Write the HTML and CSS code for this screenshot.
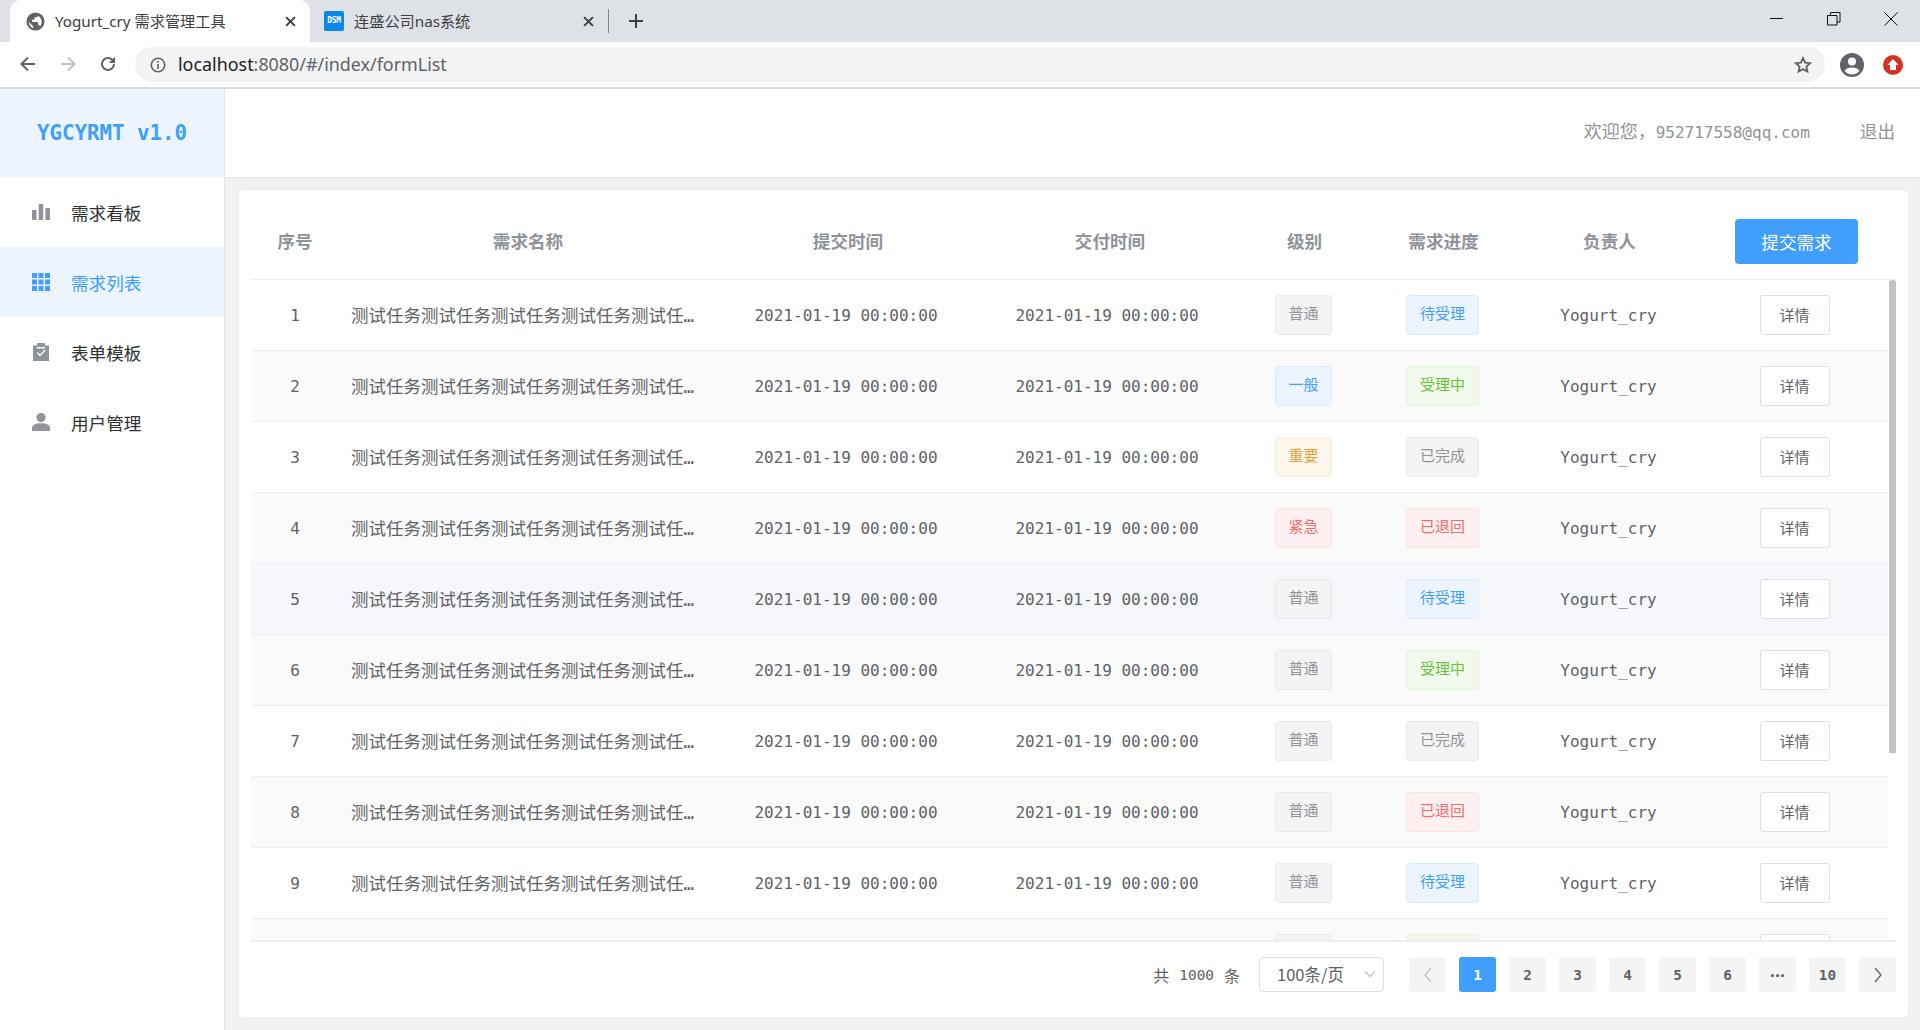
FILE: index.html
```html
<!DOCTYPE html>
<html lang="zh-CN">
<head>
<meta charset="utf-8">
<title>Yogurt_cry 需求管理工具</title>
<link rel="stylesheet" href="styles.css">
</head>
<body>
<svg class="defs" width="0" height="0" aria-hidden="true">
  <symbol id="i-bars" viewBox="0 0 18 18"><path d="M0 7h4.500v10H0zM6.700 1h4.500v16H6.700zM13.400 5h4.500v12h-4.500z"/></symbol>
  <symbol id="i-grid" viewBox="0 0 18 18"><path d="M0 0h5v5H0zM6.500 0h5v5h-5zM13 0h5v5h-5zM0 6.500h5v5H0zM6.500 6.500h5v5h-5zM13 6.500h5v5h-5zM0 13h5v5H0zM6.500 13h5v5h-5zM13 13h5v5h-5z"/></symbol>
  <symbol id="i-clip" viewBox="0 0 18 18"><path fill-rule="evenodd" d="M1 2.500h4V1.200C5 .5 5.500 0 6.200 0h5.600c.7 0 1.200.5 1.200 1.200v1.300h4V18H1zM5 4v1.500h8V4zm-.2 6.300 3.200 3.200 5.600-5.700-1-1-4.600 4.700-2.200-2.200z"/></symbol>
  <symbol id="i-user" viewBox="0 0 18 18"><circle cx="9" cy="4.600" r="4.600"/><path d="M0 18v-3c0-3 3.500-4.700 9-4.700s9 1.700 9 4.700v3z"/></symbol>
</svg>

<div class="chrome">
  <div class="tabstrip">
    <div class="tab tab-active">
      <svg class="tab-icon" viewBox="0 0 20 20"><circle cx="10" cy="10" r="9.500" fill="#5f6368"/><path fill="#fff" d="M9 17.400C5.800 17 3.300 13.900 2.900 10.500L7.500 15v1a1.500 1.500 0 0 0 1.500 1.400zM15 15c-.2-.6-.8-1-1.400-1h-.9v-2.800c0-.4-.4-.8-.8-.8H6.500V8.200h1.700c.4 0 .8-.4.8-.8V5.600h1.800c.8 0 1.500-.7 1.500-1.500V3.700A7.500 7.500 0 0 1 15 15z"/></svg>
      <span class="tab-title">Yogurt_cry 需求管理工具</span>
      <svg class="tab-close" viewBox="0 0 10 10"><path d="M1 1l8 8M9 1L1 9"/></svg>
    </div>
    <div class="tab tab-idle">
      <span class="favicon">DSM</span>
      <span class="tab-title">连盛公司nas系统</span>
      <svg class="tab-close" viewBox="0 0 10 10"><path d="M1 1l8 8M9 1L1 9"/></svg>
    </div>
    <span class="tab-sep"></span>
    <svg class="tab-plus" viewBox="0 0 16 16"><path d="M8 1v14M1 8h14"/></svg>
    <div class="win-ctrls">
      <svg viewBox="0 0 14 14"><path d="M0 6.500h13"/></svg>
      <svg viewBox="0 0 14 14"><path d="M.5 3.500h9.500v9.500H.5zM3.500 3.500V.5H13v9.500h-3"/></svg>
      <svg viewBox="0 0 14 14"><path d="M.5.5l13 13M13.500.5l-13 13"/></svg>
    </div>
  </div>
  <div class="toolbar">
    <svg class="nav-icon" viewBox="0 0 18 18"><path d="M16 9H3M9 2.500 2.500 9 9 15.500"/></svg>
    <svg class="nav-icon nav-off" viewBox="0 0 18 18"><path d="M2 9h13M9 2.500 15.500 9 9 15.500"/></svg>
    <svg class="nav-icon" viewBox="0 0 18 18"><path d="M15 9a6 6 0 1 1-1.800-4.300L15 6.500"/><path class="solid" d="M16 1.800V8h-6.200z"/></svg>
    <div class="omnibox">
      <svg class="info" viewBox="0 0 16 16"><circle cx="8" cy="8" r="6.700"/><path d="M8 7v5M8 4v1.800"/></svg>
      <span class="url"><b>localhost</b>:8080/#/index/formList</span>
      <svg class="star" viewBox="0 0 18 18"><path d="M9 2l2.100 4.600 5 .6-3.700 3.400 1 4.900L9 13.100l-4.400 2.400 1-4.900L1.900 7.200l5-.6z"/></svg>
    </div>
    <svg class="avatar" viewBox="0 0 24 24"><circle cx="12" cy="12" r="12" fill="#5f6368"/><circle cx="12" cy="8.500" r="4" fill="#fff"/><path fill="#fff" d="M4.500 18c1.400-2.500 4.200-3.500 7.500-3.500s6.100 1 7.500 3.500a10 10 0 0 1-15 0z"/></svg>
    <svg class="update" viewBox="0 0 20 20"><circle cx="10" cy="10" r="10" fill="#d93025"/><path fill="#fff" d="M10 4l5.500 6H13v5H7v-5H4.500z"/></svg>
  </div>
</div>

<div class="app">
  <aside class="side">
    <div class="logo">YGCYRMT v1.0</div>
    <nav class="menu">
      <a class="menu-item"><svg class="menu-icon"><use href="#i-bars"/></svg>需求看板</a>
      <a class="menu-item is-active"><svg class="menu-icon"><use href="#i-grid"/></svg>需求列表</a>
      <a class="menu-item"><svg class="menu-icon"><use href="#i-clip"/></svg>表单模板</a>
      <a class="menu-item"><svg class="menu-icon"><use href="#i-user"/></svg>用户管理</a>
    </nav>
  </aside>
  <div class="main">
    <header class="topbar">
      <span class="welcome">欢迎您，<span class="mono">952717558@qq.com</span></span>
      <span class="logout">退出</span>
    </header>
    <div class="content">
      <section class="card">
        <div class="grid thead">
          <span>序号</span><span>需求名称</span><span>提交时间</span><span>交付时间</span><span>级别</span><span>需求进度</span><span>负责人</span>
          <button class="btn-primary">提交需求</button>
        </div>
        <div class="tbody">
          <div class="grid row"><span class="mono">1</span><span class="name">测试任务测试任务测试任务测试任务测试任务测</span><span class="mono">2021-01-19 00:00:00</span><span class="mono">2021-01-19 00:00:00</span><span class="tag gray">普通</span><span class="tag blue">待受理</span><span class="mono">Yogurt_cry</span><button class="btn-detail">详情</button></div>
          <div class="grid row striped"><span class="mono">2</span><span class="name">测试任务测试任务测试任务测试任务测试任务测</span><span class="mono">2021-01-19 00:00:00</span><span class="mono">2021-01-19 00:00:00</span><span class="tag blue">一般</span><span class="tag green">受理中</span><span class="mono">Yogurt_cry</span><button class="btn-detail">详情</button></div>
          <div class="grid row"><span class="mono">3</span><span class="name">测试任务测试任务测试任务测试任务测试任务测</span><span class="mono">2021-01-19 00:00:00</span><span class="mono">2021-01-19 00:00:00</span><span class="tag orange">重要</span><span class="tag gray">已完成</span><span class="mono">Yogurt_cry</span><button class="btn-detail">详情</button></div>
          <div class="grid row striped"><span class="mono">4</span><span class="name">测试任务测试任务测试任务测试任务测试任务测</span><span class="mono">2021-01-19 00:00:00</span><span class="mono">2021-01-19 00:00:00</span><span class="tag red">紧急</span><span class="tag red">已退回</span><span class="mono">Yogurt_cry</span><button class="btn-detail">详情</button></div>
          <div class="grid row hovered"><span class="mono">5</span><span class="name">测试任务测试任务测试任务测试任务测试任务测</span><span class="mono">2021-01-19 00:00:00</span><span class="mono">2021-01-19 00:00:00</span><span class="tag gray">普通</span><span class="tag blue">待受理</span><span class="mono">Yogurt_cry</span><button class="btn-detail">详情</button></div>
          <div class="grid row striped"><span class="mono">6</span><span class="name">测试任务测试任务测试任务测试任务测试任务测</span><span class="mono">2021-01-19 00:00:00</span><span class="mono">2021-01-19 00:00:00</span><span class="tag gray">普通</span><span class="tag green">受理中</span><span class="mono">Yogurt_cry</span><button class="btn-detail">详情</button></div>
          <div class="grid row"><span class="mono">7</span><span class="name">测试任务测试任务测试任务测试任务测试任务测</span><span class="mono">2021-01-19 00:00:00</span><span class="mono">2021-01-19 00:00:00</span><span class="tag gray">普通</span><span class="tag gray">已完成</span><span class="mono">Yogurt_cry</span><button class="btn-detail">详情</button></div>
          <div class="grid row striped"><span class="mono">8</span><span class="name">测试任务测试任务测试任务测试任务测试任务测</span><span class="mono">2021-01-19 00:00:00</span><span class="mono">2021-01-19 00:00:00</span><span class="tag gray">普通</span><span class="tag red">已退回</span><span class="mono">Yogurt_cry</span><button class="btn-detail">详情</button></div>
          <div class="grid row"><span class="mono">9</span><span class="name">测试任务测试任务测试任务测试任务测试任务测</span><span class="mono">2021-01-19 00:00:00</span><span class="mono">2021-01-19 00:00:00</span><span class="tag gray">普通</span><span class="tag blue">待受理</span><span class="mono">Yogurt_cry</span><button class="btn-detail">详情</button></div>
          <div class="grid row striped"><span class="mono">10</span><span class="name">测试任务测试任务测试任务测试任务测试任务测</span><span class="mono">2021-01-19 00:00:00</span><span class="mono">2021-01-19 00:00:00</span><span class="tag gray">普通</span><span class="tag green">受理中</span><span class="mono">Yogurt_cry</span><button class="btn-detail">详情</button></div>
          <div class="scroll-thumb"></div>
        </div>
        <footer class="pager">
          <span class="total">共<span class="total-n">1000</span>条</span>
          <div class="size-select"><span>100条/页</span><svg viewBox="0 0 12 12"><path d="M1 3.500l5 5 5-5"/></svg></div>
          <div class="pages">
            <span class="page"><svg viewBox="0 0 10 16"><path class="off" d="M8 1 2 8l6 7"/></svg></span>
            <span class="page current">1</span>
            <span class="page">2</span>
            <span class="page">3</span>
            <span class="page">4</span>
            <span class="page">5</span>
            <span class="page">6</span>
            <span class="page dots">•••</span>
            <span class="page">10</span>
            <span class="page"><svg viewBox="0 0 10 16"><path d="M2 1l6 7-6 7"/></svg></span>
          </div>
        </footer>
      </section>
    </div>
  </div>
</div>
</body>
</html>
```

FILE: styles.css
```css
* { box-sizing: border-box; }
html, body { margin: 0; height: 100%; }
body {
  width: 1920px;
  height: 1030px;
  overflow: hidden;
  display: flex;
  flex-direction: column;
  font-family: "Noto Sans CJK SC", "Noto Sans", sans-serif;
  background: #fff;
}
.defs { position: absolute; }

/* browser chrome */
.chrome { flex: none; height: 89px; display: flex; flex-direction: column; border-bottom: 2px solid #dadce0; }
.tabstrip { height: 42px; background: #dee1e6; display: flex; align-items: center; padding-left: 10px; }
.tab { height: 42px; display: flex; align-items: center; font-size: 15.200px; color: #3c4043; font-family: "Noto Sans", "Noto Sans CJK SC", sans-serif; }
.tab-title { flex: 1; white-space: nowrap; padding-bottom: 2px; }
.tab-active { width: 300px; background: #fff; border-radius: 10px 10px 0 0; padding: 0 14px 0 16px; }
.tab-idle { width: 294px; padding: 0 10px 0 14px; }
.tab-icon { width: 19px; height: 19px; margin-right: 10px; flex: none; }
.tab-close { width: 11px; height: 11px; flex: none; fill: none; stroke: #3c4043; stroke-width: 1.800; }
.favicon { width: 20px; height: 20px; margin-right: 10px; background: #0a87e8; border-radius: 2px; color: #fff; font: bold 8px/20px "DejaVu Sans Mono", monospace; text-align: center; letter-spacing: -.3px; }
.tab-sep { width: 1px; height: 24px; background: #80868b; margin-left: 4px; }
.tab-plus { width: 16px; height: 16px; margin-left: 19px; fill: none; stroke: #3c4043; stroke-width: 2; }
.win-ctrls { margin-left: auto; display: flex; gap: 43px; padding-right: 22px; margin-top: -5px; }
.win-ctrls svg { width: 14px; height: 14px; fill: none; stroke: #111; stroke-width: 1; }

.toolbar { height: 45px; display: flex; align-items: center; padding-left: 19px; background: #fff; }
.nav-icon { width: 18px; height: 18px; margin: 0 22px 1px 0; fill: none; stroke: #5f6368; stroke-width: 2; flex: none; }
.nav-icon .solid { fill: #5f6368; stroke: none; }
.nav-off { stroke: #bdc1c6; }
.omnibox { width: 1690px; height: 35px; margin-left: -4px; background: #f1f3f4; border-radius: 18px; display: flex; align-items: center; padding: 0 13px 0 15px; flex: none; }
.info { width: 16px; height: 16px; fill: none; stroke: #5f6368; stroke-width: 1.600; margin-right: 12px; }
.url { flex: 1; font-size: 17.900px; color: #5f6368; font-family: "Noto Sans", sans-serif; padding-bottom: 2px; }
.url b { font-weight: 400; color: #202124; }
.star { width: 18px; height: 18px; fill: none; stroke: #5f6368; stroke-width: 1.800; }
.avatar { width: 24px; height: 24px; margin-left: 15px; flex: none; }
.update { width: 20px; height: 20px; margin-left: 19px; flex: none; }

/* app */
.app { flex: 1; display: flex; min-height: 0; }
.side { width: 225px; flex: none; border-right: 1px solid #e6e6e6; background: #fff; }
.logo { height: 88px; background: #ecf5ff; color: #409eff; font: bold 20.800px/88px "DejaVu Sans Mono", monospace; text-align: center; }
.menu { display: flex; flex-direction: column; }
.menu-item { height: 70px; display: flex; align-items: center; padding-left: 32px; font-size: 17.600px; color: #303133; }
.menu-item.is-active { background: #ecf5ff; color: #409eff; }
.menu-icon { width: 18px; height: 18px; margin-right: 21px; fill: #909399; }
.is-active .menu-icon { fill: #409eff; }

.main { flex: 1; display: flex; flex-direction: column; min-width: 0; }
.topbar { height: 89px; flex: none; background: #fff; border-bottom: 1px solid #e6e6e6; display: flex; align-items: center; justify-content: flex-end; padding: 0 25px 6px 0; font-size: 18px; color: #909399; }
.logout { margin-left: 50px; font-size: 17.600px; }
.welcome { white-space: nowrap; }
.mono, .total-n { font-family: "DejaVu Sans Mono", "Noto Sans CJK SC", monospace; font-size: 16px; }

.content { flex: 1; min-height: 0; background: #f1f1f1; padding: 11px 11px 12px 13px; }
.card { height: 829px; background: #fff; border: 1px solid #ebeef5; border-radius: 6px; padding: 0 12px 0 12px; display: flex; flex-direction: column; }

.grid {
  display: grid;
  grid-template-columns: 88px 378px 258px 264px 129px 149px 183px 188px;
  align-items: center;
  justify-items: center;
}
.thead {
  grid-template-columns: 88px 378px 262px 262px 127px 151px 181px 188px;
  flex: none;
  height: 90px;
  padding-top: 13px;
  border-bottom: 1px solid #ebeef5;
  font-size: 17.600px;
  font-weight: 700;
  color: #909399;
}
.thead > span { margin-bottom: 2px; }
.btn-primary { justify-self: start; margin-left: 35px; width: 123px; height: 45px; border: 0; border-radius: 4px; background: #409eff; color: #fff; font: 400 17.600px "Noto Sans CJK SC", sans-serif; white-space: nowrap; padding: 0; }

.tbody { position: relative; flex: none; height: 662px; overflow: hidden; border-bottom: 2px solid #ebeef5; }
.row { width: 1637px; height: 71px; padding-bottom: 1px; border-bottom: 1px solid #ebeef5; color: #606266; background: #fff; }
.row.striped { background: #fafafa; }
.row.hovered { background: #f5f7fa; }
.row > .mono { padding-top: 2px; }
.name {
  justify-self: stretch;
  margin: 0 20px 0 12px;
  font-family: "DejaVu Sans Mono", "Noto Sans CJK SC", sans-serif;
  font-size: 17.500px;
  white-space: nowrap;
  overflow: hidden;
  text-overflow: ellipsis;
}
.tag { width: 57px; height: 40px; padding: 0 0 5px; display: flex; align-items: center; justify-content: center; border: 1px solid; border-radius: 4px; font-size: 15px; line-height: 1; }
.tag:nth-child(6) { width: 73px; }
.gray { background: #f4f4f5; border-color: #e9e9eb; color: #909399; }
.blue { background: #ecf5ff; border-color: #d9ecff; color: #409eff; }
.green { background: #f0f9eb; border-color: #e1f3d8; color: #67c23a; }
.orange { background: #fdf6ec; border-color: #faecd8; color: #e6a23c; }
.red { background: #fef0f0; border-color: #fde2e2; color: #f56c6c; }
.btn-detail { width: 70px; height: 40px; margin-left: 1px; padding: 0; background: #fff; border: 1px solid #dcdfe6; border-radius: 3px; color: #606266; font: 400 15px "Noto Sans CJK SC", sans-serif; }
.scroll-thumb { position: absolute; top: 0; right: 0; width: 7px; height: 473px; background: #c1c1c7; border-radius: 3px 3px 0 0; }

.pager { flex: none; display: flex; align-items: center; justify-content: flex-end; padding-top: 15px; color: #606266; }
.total { display: flex; align-items: center; gap: 10px; font-size: 16px; margin-right: 19px; }
.total .total-n { font-size: 14.400px; }
.size-select { width: 125px; height: 35px; border: 1px solid #dcdfe6; border-radius: 4px; display: flex; align-items: center; justify-content: space-between; padding: 0 7px 2px 17px; font-size: 16.500px; background: #fff; }
.size-select svg { width: 12px; height: 12px; fill: none; stroke: #c0c4cc; stroke-width: 1.300; }
.pages { display: flex; gap: 13px; margin-left: 25px; }
.page { width: 37px; height: 35px; display: flex; align-items: center; justify-content: center; background: #f4f4f5; border-radius: 3px; color: #606266; font: bold 14.400px "DejaVu Sans Mono", monospace; }
.page.dots { font-size: 8.500px; padding-top: 3px; }
.page svg { width: 10px; height: 16px; fill: none; stroke: #606266; stroke-width: 1.300; }
.page svg .off { stroke: #c0c4cc; }
.page.current { background: #409eff; color: #fff; }
```
